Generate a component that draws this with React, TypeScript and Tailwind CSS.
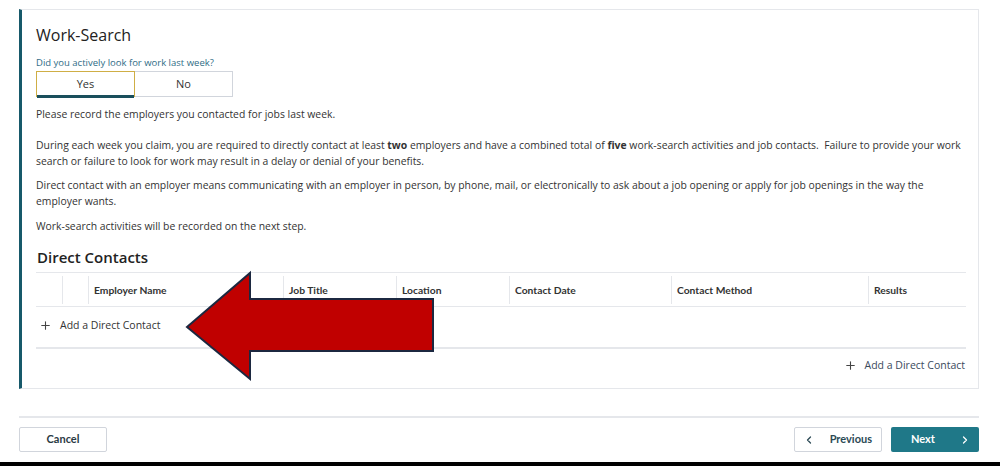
import { Plus, ChevronLeft, ChevronRight } from 'lucide-react';

const COLUMNS = [
  { label: '', w: 'w-[26px]' },
  { label: '', w: 'w-[26px]' },
  { label: 'Employer Name', w: 'w-[195px]' },
  { label: 'Job Title', w: 'w-[113px]' },
  { label: 'Location', w: 'w-[113px]' },
  { label: 'Contact Date', w: 'w-[162px]' },
  { label: 'Contact Method', w: 'w-[197px]' },
  { label: 'Results', w: 'flex-1' },
];

const body = "font-['Open_Sans',sans-serif]";
const bold = "font-['Lato','Liberation_Sans',sans-serif] font-bold";

export default function App() {
  return (
    <div className={`relative w-[1000px] h-[466px] overflow-hidden bg-white text-[#333] ${body}`}>
      <div className="pt-[9px] pl-[19px] pr-[21px]">
        {/* work-search card */}
        <section className="h-[380px] border border-gray-200 border-l-[3px] border-l-[#17596a] pl-[14px] pr-[12px] pt-[14px]">
          <h1 className="text-[16px] leading-[22px] text-[#222]">Work-Search</h1>
          <p className="mt-[11px] text-[9.5px] leading-[12px] text-[#2f6c86]">Did you actively look for work last week?</p>
          <div className="flex w-[197px] h-[26px] mt-[2px] text-[11px]">
            <button className="relative w-[99px] border-[1.5px] border-[#cfae45] border-b-0 flex items-center justify-center">
              Yes
              <span className="absolute left-0 right-0 -bottom-px h-[3px] bg-[#1a4f5c]" />
            </button>
            <button className="flex-1 border border-l-0 border-gray-300 flex items-center justify-center">No</button>
          </div>

          <div className="text-[10.4px] leading-[16px] mt-[9px] pr-[2px]">
            <p>Please record the employers you contacted for jobs last week.</p>
            <p className="mt-[15px]">
              During each week you claim, you are required to directly contact at least <b>two</b> employers and have a combined total of <b>five</b> work-search activities and job contacts.&nbsp; Failure to provide your work search or failure to look for work may result in a delay or denial of your benefits.
            </p>
            <p className="mt-[8px]">
              Direct contact with an employer means communicating with an employer in person, by phone, mail, or electronically to ask about a job opening or apply for job openings in the way the employer wants.
            </p>
            <p className="mt-[9px]">Work-search activities will be recorded on the next step.</p>
          </div>

          <h2 className="mt-[13px] text-[15px] leading-[20px] font-semibold text-[#222] pl-px">Direct Contacts</h2>

          {/* table */}
          <div className="mt-[5px]">
            <div className="flex h-[35px] border-y border-gray-200 items-center">
              {COLUMNS.map((c, i) => (
                <div
                  key={i}
                  className={`${c.w} h-[28px] flex items-center pl-[5px] pt-[3px] text-[10.3px] text-[#333] ${bold} ${i > 0 ? 'border-l border-gray-200' : ''}`}
                >
                  {c.label}
                </div>
              ))}
            </div>
            <div className="h-[42px] border-b-2 border-gray-200 flex items-center gap-[8px] pl-[3px] pb-[3px] text-[10.5px]">
              <Plus size={13} strokeWidth={2} className="text-[#444]" />
              <span>Add a Direct Contact</span>
            </div>
            <div className="flex justify-end items-center gap-[8px] h-[33px] text-[10.5px] pr-px">
              <Plus size={13} strokeWidth={2} className="text-[#444]" />
              <span className="text-[#3a4a5c]">Add a Direct Contact</span>
            </div>
          </div>
        </section>

        {/* footer */}
        <div className="mt-[27px] border-t-2 border-gray-200 pt-[9px] flex items-center">
          <button className={`w-[88px] h-[25px] border border-gray-300 rounded-[2px] text-[11px] text-[#2b3a44] ${bold}`}>Cancel</button>
          <div className="ml-auto flex gap-[9px]">
            <button className={`w-[88px] h-[25px] border border-gray-300 rounded-[2px] flex items-center pl-[8px] pr-[9px] text-[11px] text-[#2b4a55] ${bold}`}>
              <ChevronLeft size={12} strokeWidth={2.5} />
              <span className="ml-auto">Previous</span>
            </button>
            <button className={`w-[88px] h-[25px] rounded-[2px] bg-[#1f7888] flex items-center pl-[20px] pr-[8px] text-[11px] text-white ${bold}`}>
              <span>Next</span>
              <ChevronRight size={12} strokeWidth={2.5} className="ml-auto" />
            </button>
          </div>
        </div>
      </div>

      {/* annotation arrow drawn over the screenshot */}
      <svg className="absolute left-0 top-0 pointer-events-none" width="1000" height="466">
        <polygon
          points="187,327 250,273 250,299 433,299 433,351 250,351 250,379"
          fill="#c00000"
          stroke="#1c2840"
          strokeWidth="2"
          strokeLinejoin="miter"
        />
      </svg>

      <div className="absolute left-0 right-0 bottom-0 h-[4px] bg-black" />
    </div>
  );
}
